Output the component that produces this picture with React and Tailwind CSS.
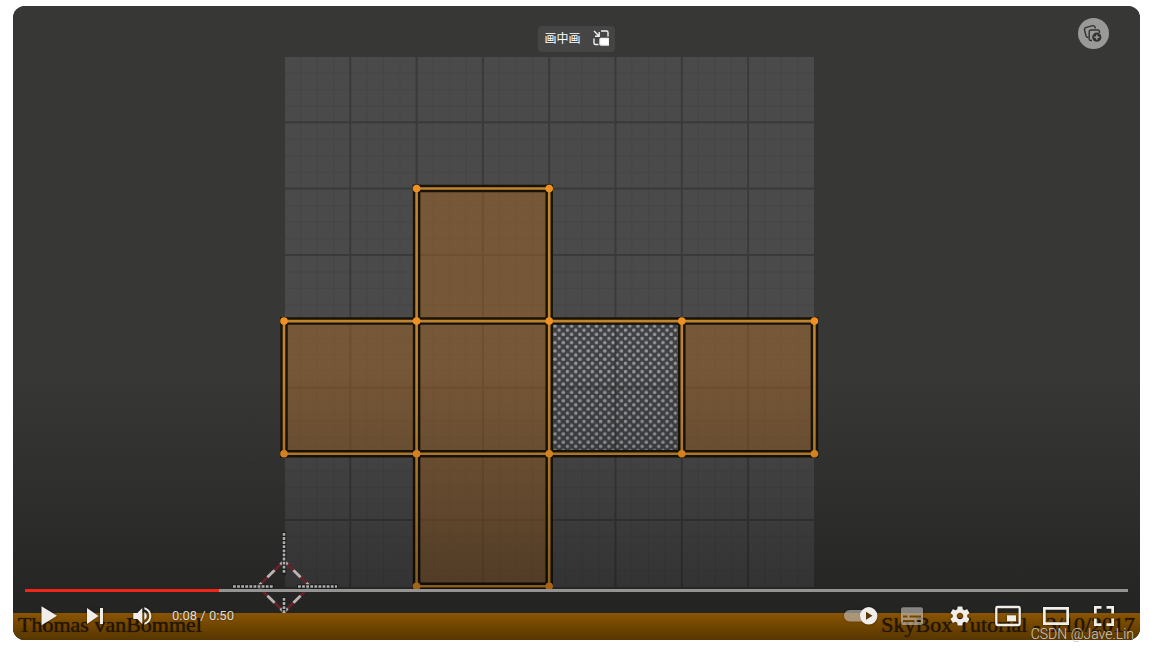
const UNIT = 132.6;
const LEFT = 284;
const TOP = 188.5;

// cells of the unfolded cube, as [column, row]
const faces = [[1, 0], [0, 1], [1, 1], [3, 1], [1, 2]];
const activeFace = [2, 1];

// edges between corners of the unfolded cube
const edges = [
  [1, 0, 2, 0], [0, 1, 4, 1], [0, 2, 4, 2], [1, 3, 2, 3],
  [0, 1, 0, 2], [1, 0, 1, 3], [2, 0, 2, 3], [3, 1, 3, 2], [4, 1, 4, 2],
];
const corners = [
  [1, 0], [2, 0], [0, 1], [1, 1], [2, 1], [3, 1], [4, 1],
  [0, 2], [1, 2], [2, 2], [3, 2], [4, 2], [1, 3], [2, 3],
];

const px = (c) => LEFT + c * UNIT;
const py = (r) => TOP + r * UNIT;
const range = (n) => Array.from({ length: n }, (_, i) => i + 1);

function EditorFrame() {
  return (
    <svg viewBox="13 6 1127 634" className="absolute inset-0 h-full w-full" aria-hidden="true">
      <defs>
        <pattern id="stipple" x="553" y="324" width="8.3" height="8.3" patternUnits="userSpaceOnUse">
          <rect width="8.3" height="8.3" fill="#404144" />
          <circle cx="2" cy="2" r="1.7" fill="#97989b" />
          <circle cx="6.15" cy="6.15" r="1.7" fill="#97989b" />
        </pattern>
        <linearGradient id="shade" x1="0" y1="0" x2="0" y2="1">
          <stop offset="0" stopColor="#000" stopOpacity="0" />
          <stop offset="0.5" stopColor="#000" stopOpacity="0.18" />
          <stop offset="1" stopColor="#000" stopOpacity="0.4" />
        </linearGradient>
      </defs>
      <rect x="13" y="6" width="1127" height="634" fill="#373736" />
      <rect x="285" y="57" width="529" height="530" fill="#4a4a4a" />
      {range(31).map((i) => (
        <path key={i} d={`M${284 + i * 16.57} 57V587M285 ${56.5 + i * 16.57}H814`} stroke="#464646" strokeWidth="1" />
      ))}
      {range(7).map((i) => (
        <path key={i} d={`M${284 + i * 66.3} 57V587M285 ${56 + i * 66.3}H814`} stroke="#3a3a3a" strokeWidth="2" />
      ))}
      {faces.map(([c, r]) => (
        <rect key={`${c}-${r}`} x={px(c)} y={py(r)} width={UNIT} height={UNIT} fill="#a26424" fillOpacity="0.5" />
      ))}
      <rect x={px(activeFace[0]) + 2} y={py(activeFace[1]) + 2} width={UNIT - 4} height={UNIT - 4} fill="url(#stipple)" />
      <path d="M615.5 324V452M552 387.5H680" stroke="#222" strokeOpacity="0.4" strokeWidth="2" />
      {edges.map((e) => (
        <path key={e.join()} d={`M${px(e[0])} ${py(e[1])}L${px(e[2])} ${py(e[3])}`} stroke="#1a1206" strokeWidth="7.5" strokeLinecap="square" />
      ))}
      {edges.map((e) => (
        <path key={e.join()} d={`M${px(e[0])} ${py(e[1])}L${px(e[2])} ${py(e[3])}`} stroke="#be8631" strokeWidth="2.6" />
      ))}
      {corners.map(([c, r]) => (
        <circle key={`${c}-${r}`} cx={px(c)} cy={py(r)} r="3.8" fill="#ee9122" />
      ))}
      <rect x="13" y="370" width="1127" height="270" fill="url(#shade)" />

      {/* 2D cursor */}
      <path d="M284 561L310 586.5L284 612L258 586.5Z" fill="none" stroke="#6a2228" strokeWidth="2.5" />
      <path d="M284 561L310 586.5L284 612L258 586.5Z" fill="none" stroke="#b9b5b5" strokeWidth="2.8" strokeDasharray="10 8.2" strokeDashoffset="5" />
      <path d="M284 532V575M284 597V612M232 586.5H274M297 586.5H338" stroke="#1c1c1c" strokeWidth="4.5" />
      <path d="M284 533V574M284 598V612M233 586.5H273M298 586.5H337" stroke="#adadad" strokeWidth="2.6" strokeDasharray="2.8 1.3" />
    </svg>
  );
}

function Icon({ children, size = "size-7", box = "0 0 28 28" }) {
  return (
    <svg viewBox={box} className={`${size} shrink-0 drop-shadow-[0_0_1px_rgba(0,0,0,0.5)]`} fill="#f1eeea" aria-hidden="true">
      {children}
    </svg>
  );
}

function ControlButton({ label, width = "w-12", children }) {
  return (
    <button type="button" aria-label={label} className={`flex h-12 ${width} shrink-0 items-center justify-center`}>
      {children}
    </button>
  );
}

function Controls() {
  return (
    <div className="px-3">
      <div role="progressbar" aria-label="Seek" aria-valuemin={0} aria-valuemax={50} aria-valuenow={8} className="h-[3px] bg-[#959493]">
        <div className="h-full bg-[#f0261b]" style={{ width: "17.6%" }} />
      </div>
      <div className="flex h-12 items-center">
        <ControlButton label="Play" width="w-[47px]">
          <Icon><path d="M6.5 4.3L22 13.8L6.5 23.3Z" /></Icon>
        </ControlButton>
        <ControlButton label="Next" width="w-[47px]">
          <Icon><path d="M5 6L16.5 14L5 22ZM18 6H21V22H18Z" /></Icon>
        </ControlButton>
        <ControlButton label="Mute" width="w-[47px]">
          <Icon size="size-6" box="0.7 0 24 24">
            <path d="M3 9v6h4l5 5V4L7 9H3zm13.5 3c0-1.77-1.02-3.29-2.5-4.03v8.05c1.48-.73 2.5-2.25 2.5-4.02zM14 3.23v2.06c2.89.86 5 3.54 5 6.71s-2.11 5.85-5 6.71v2.06c4.01-.91 7-4.49 7-8.77s-2.99-7.86-7-8.77z" />
          </Icon>
        </ControlButton>
        <span className="ml-1.5 text-[13px] text-[#dddddd] [text-shadow:0_0_2px_rgba(0,0,0,0.5)]">0:08 / 0:50</span>

        <div className="ml-auto flex">
          <ControlButton label="Autoplay" width="w-[54px]">
            <Icon size="h-7 w-9" box="0 0 36 28">
              <rect x="1" y="8" width="28" height="11.5" rx="5.7" fillOpacity="0.5" />
              <circle cx="25.7" cy="13.8" r="8.7" />
              <path d="M23 9.8L29.5 13.8L23 17.8Z" fill="#5a3a08" />
            </Icon>
          </ControlButton>
          <ControlButton label="Subtitles">
            <Icon>
              <path fillRule="evenodd" fillOpacity="0.5" d="M5 5.3H23A2 2 0 0 1 25 7.3V21A2 2 0 0 1 23 23H5A2 2 0 0 1 3 21V7.3A2 2 0 0 1 5 5.3ZM5 13.5V15.5H9.5V13.5ZM11.5 13.5V15.5H23V13.5ZM5 18V20H16.5V18ZM18.5 18V20H23V18Z" />
            </Icon>
          </ControlButton>
          <ControlButton label="Settings">
            <Icon size="size-6" box="0 0 24 24">
              <path d="M19.14 12.94c.04-.3.06-.61.06-.94 0-.32-.02-.64-.07-.94l2.03-1.58c.18-.14.23-.41.12-.61l-1.92-3.32c-.12-.22-.37-.29-.59-.22l-2.39.96c-.5-.38-1.03-.7-1.62-.94l-.36-2.54c-.04-.24-.24-.41-.48-.41h-3.84c-.24 0-.43.17-.47.41l-.36 2.54c-.59.24-1.13.57-1.62.94l-2.39-.96c-.22-.08-.47 0-.59.22L2.74 8.87c-.12.21-.08.47.12.61l2.03 1.58c-.05.3-.09.63-.09.94s.02.64.07.94l-2.03 1.58c-.18.14-.23.41-.12.61l1.92 3.32c.12.22.37.29.59.22l2.39-.96c.5.38 1.03.7 1.62.94l.36 2.54c.05.24.24.41.48.41h3.84c.24 0 .44-.17.47-.41l.36-2.54c.59-.24 1.13-.56 1.62-.94l2.39.96c.22.08.47 0 .59-.22l1.92-3.32c.12-.22.07-.47-.12-.61l-2.01-1.58zM12 15.3c-1.82 0-3.3-1.48-3.3-3.3s1.48-3.3 3.3-3.3 3.3 1.48 3.3 3.3-1.48 3.3-3.3 3.3z" />
            </Icon>
          </ControlButton>
          <ControlButton label="Miniplayer">
            <Icon>
              <rect x="2.3" y="5" width="23.4" height="18" rx="1.2" fill="none" stroke="#f1eeea" strokeWidth="2.3" />
              <path d="M13 13.3H22V19.3H13Z" />
            </Icon>
          </ControlButton>
          <ControlButton label="Theater mode">
            <Icon><path fillRule="evenodd" d="M1 5H27V23H1ZM3.7 7.7V20.3H24.3V7.7Z" /></Icon>
          </ControlButton>
          <ControlButton label="Full screen">
            <Icon>
              <path d="M4 4H11.5V6.7H6.7V11.5H4ZM16.5 4H24V11.5H21.3V6.7H16.5ZM4 16.5H6.7V21.3H11.5V24H4ZM21.3 16.5H24V24H16.5V21.3H21.3Z" />
            </Icon>
          </ControlButton>
        </div>
      </div>
    </div>
  );
}

export default function App() {
  return (
    <main className="bg-white pt-1.5 pr-[9px] pb-2.5 pl-[13px] font-[Roboto,'Liberation_Sans',sans-serif]">
      <section aria-label="Video player" className="relative flex aspect-[1127/634] w-full flex-col rounded-xl bg-[#373736]">
        <div className="absolute inset-0 overflow-hidden rounded-xl">
          <EditorFrame />
          <p className="absolute inset-x-0 bottom-0 flex h-[27px] items-start justify-between bg-linear-to-b from-[#8a5500] to-[#573600] px-[5px] font-['Liberation_Serif',serif] text-[22px] leading-6 text-[#241603] [text-shadow:0_0_1px_#241603]">
            <span>Thomas vanBommel</span>
            <span>SkyBox Tutorial - 3/10/2017</span>
          </p>
        </div>

        <div className="relative grid grid-cols-3 items-start pt-3">
          <span />
          <button type="button" className="mt-2 flex h-[26px] items-center gap-3 justify-self-center rounded bg-[#454545] px-1.5 pb-0.5 font-['Noto_Sans_CJK_SC',sans-serif] text-xs text-white">
            画中画
            <svg viewBox="0 0 16 16" className="size-4" fill="none" stroke="#f0f0f0" strokeWidth="1.4" aria-hidden="true">
              <path d="M1 1L6 6M6.2 2V6.2H2" />
              <path d="M8 1H13.5Q15 1 15 2.5V6.5M1 8.5V13Q1 14.5 2.5 14.5H5.5" />
              <rect x="7" y="8.5" width="9" height="6.5" rx="1" fill="#fff" />
            </svg>
          </button>
          <button type="button" aria-label="Add to collection" className="mr-[31px] flex size-[31px] items-center justify-center justify-self-end rounded-full bg-[#999998]">
            <svg viewBox="0 0 20 20" className="size-5" fill="none" stroke="#333332" strokeWidth="1.4" aria-hidden="true">
              <path d="M5.5 13.5L4.4 13.3Q3.4 13 3.1 12L1.5 6Q1.2 4.2 2.7 3.7L9.7 1.7Q11.3 1.4 11.9 2.8L12.4 4.5" />
              <path d="M9 16.5H8Q6.2 16.5 6.2 14.7V7.8Q6.2 6 8 6H14.7Q16.5 6 16.5 7.8V9" />
              <circle cx="13.8" cy="13.2" r="3.9" fill="#333332" />
              <path d="M13.8 10.7V15.7M11.3 13.2H16.3" stroke="#999998" />
            </svg>
          </button>
        </div>

        <div className="relative mt-auto">
          <Controls />
        </div>

        <span className="absolute right-1.5 -bottom-1 text-sm leading-5 font-light text-[#cfccc8]">CSDN @Jave.Lin</span>
      </section>
    </main>
  );
}
